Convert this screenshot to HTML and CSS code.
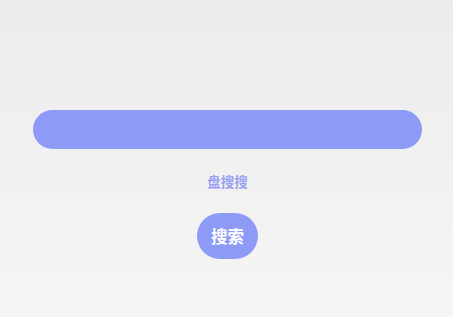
FILE: index.html
```html
<!DOCTYPE html>
<html lang="zh">
<head>
<meta charset="utf-8">
<link rel="stylesheet" href="styles.css">
</head>
<body>
<main class="page">
  <div class="search-bar"></div>
  <div class="brand">盘搜搜</div>
  <button class="search-btn">搜索</button>
</main>
</body>
</html>
```
FILE: styles.css
```css
html, body {
  margin: 0;
  padding: 0;
  height: 100%;
}
body {
  background: linear-gradient(180deg, #ececec 0%, #f5f5f5 100%);
  font-family: "Noto Sans CJK SC", "Noto Sans", sans-serif;
}
.page {
  display: flex;
  flex-direction: column;
  align-items: center;
  padding-top: 110px;
  padding-left: 2px;
}
.search-bar {
  width: 389px;
  height: 39px;
  border-radius: 20px;
  background: #8e9bf6;
}
.brand {
  margin-top: 22px;
  font-size: 13.5px;
  line-height: 20px;
  font-weight: 700;
  color: #9aa2f0;
}
.search-btn {
  margin-top: 22px;
  width: 61px;
  height: 46px;
  border: none;
  border-radius: 23px;
  background: #8e9bf6;
  color: #ffffff;
  font-family: "Noto Sans CJK SC", "Noto Sans", sans-serif;
  font-size: 16.5px;
  font-weight: 700;
  padding: 0;
}
```
